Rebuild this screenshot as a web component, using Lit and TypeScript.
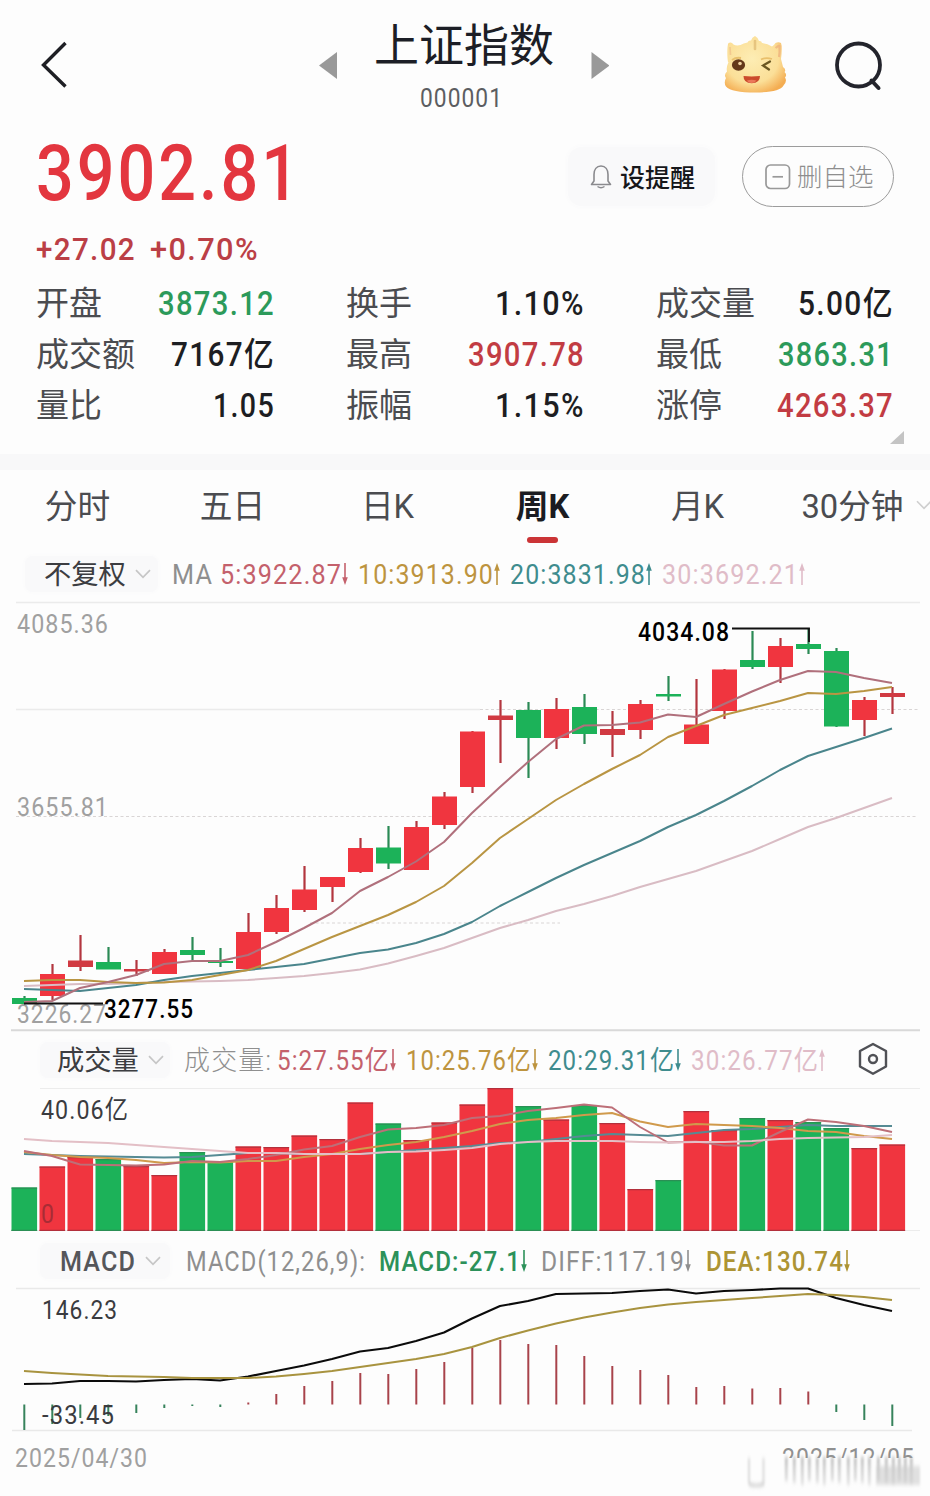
import { LitElement, html, svg, css } from "lit";
import { customElement } from "lit/decorators.js";

const STEP = 28;
const X0 = 24;
const RED = "#f0353f";
const GREEN = "#1cb259";
const cx = (i: number) => X0 + i * STEP;

// [colour, body top, body bottom, wick top, wick bottom]
type Candle = [string, number, number, number, number];
const candles: Candle[] = [
  ["g", 998, 1004, 996, 1004], ["r", 974, 996, 964, 1000], ["r", 960.5, 967, 935, 971],
  ["g", 962, 969.5, 947, 969], ["r", 969, 971.5, 960, 976], ["r", 952, 974, 949, 974],
  ["g", 950, 955, 937, 960], ["g", 961, 963, 948, 967], ["r", 932, 969, 913, 969],
  ["r", 908, 932, 895, 934], ["r", 889.5, 910, 866, 912], ["r", 877, 887, 877, 902],
  ["r", 848, 872, 838, 873], ["g", 847.5, 863.5, 826, 869], ["r", 827, 870, 821, 870],
  ["r", 796.5, 825, 792, 829], ["r", 731.5, 787, 731, 793], ["r", 715.5, 720, 700, 763],
  ["g", 710, 738, 702, 778], ["r", 709, 738, 698, 749], ["g", 707, 734, 694, 744],
  ["r", 729, 735, 711, 757], ["r", 704, 730, 700, 739], ["g", 694, 696.5, 676, 701],
  ["r", 724.5, 744, 679, 744], ["r", 669.5, 711, 669, 719], ["g", 660, 667, 631, 669],
  ["r", 646, 667, 638, 683], ["g", 644, 649, 628, 654], ["g", 651, 726.5, 648, 727],
  ["r", 700, 720, 697, 736], ["r", 693, 697, 687, 714],
];
const ma5 = [1002, 1001, 988, 982, 975, 964, 961, 961, 955, 942, 928, 913, 891, 877, 861.5, 842, 813, 787, 762, 739, 725.5, 725, 722.5, 714.5, 717, 704, 691.5, 680, 671, 672, 678, 683];
const ma10 = [981, 980, 980, 982, 983, 982.5, 980, 975, 970, 961, 949, 937, 926, 915, 902, 886, 863, 838, 819, 800, 784, 769, 755, 737, 726, 715, 708, 701, 693, 694, 691, 687];
const ma20 = [989, 990, 991, 988, 985, 980, 976, 973, 970, 967, 964, 958.5, 953, 949.5, 943, 934, 922, 906, 892, 878, 865, 853, 841, 827, 815, 801, 786, 770, 756, 747, 738, 728.5];
const ma30 = [986, 985, 984, 984, 983, 982, 981.5, 981, 980, 978, 976, 973, 969.5, 963.5, 956, 948, 938, 928, 920, 911, 904, 896, 887, 879, 871, 861, 851, 839, 827, 818, 808, 798];

const volTop = [1187.5, 1166.5, 1157, 1159, 1166, 1175, 1152, 1161, 1146.5, 1147, 1135.5, 1139, 1102.5, 1123.5, 1140, 1122.5, 1104.5, 1088, 1106, 1119.5, 1105, 1123, 1189, 1180, 1111, 1130, 1118, 1120, 1122, 1128, 1148, 1144.5];
const volColor = "grrgrrggrrrrrgrrrrgrgrrgrrgrggrr";
const v5 = [1151, 1156, 1164.5, 1165, 1165.5, 1164.5, 1161, 1162, 1159, 1155, 1149.5, 1146, 1137, 1129.5, 1128, 1125, 1118, 1116, 1111, 1108, 1104.5, 1107.5, 1127, 1142.5, 1141.5, 1145.5, 1145.5, 1132, 1119.5, 1122, 1126, 1132];
const v10 = [1152, 1155, 1157, 1158, 1160, 1163, 1162, 1162.5, 1161, 1161, 1157, 1154, 1149, 1145, 1142, 1137, 1131, 1124, 1120, 1118, 1115, 1113, 1121.5, 1127, 1124, 1125, 1126, 1128, 1131, 1132, 1136, 1139];
const v20 = [1154, 1155, 1156, 1156.5, 1157, 1157.5, 1157, 1155, 1153, 1153, 1154, 1154, 1154, 1152, 1150, 1148, 1146, 1143, 1142, 1139, 1136, 1134, 1135, 1136, 1133, 1130, 1129, 1127, 1125, 1126, 1126, 1126];
const v30 = [1139, 1141, 1142, 1143, 1145, 1147, 1149, 1151, 1153, 1153, 1154, 1154, 1154, 1152, 1151.5, 1150, 1148, 1144, 1142, 1141, 1141, 1141, 1142, 1142.5, 1142, 1142, 1141, 1139, 1138, 1137.5, 1137, 1135];

const hist = [1430, 1424, 1418, 1416, 1413, 1408, 1406, 1407, 1402.5, 1394, 1386, 1381, 1373, 1374, 1369, 1362, 1348, 1340, 1344, 1345, 1356, 1366, 1370, 1375, 1387, 1386, 1388.5, 1388, 1391.5, 1412, 1420, 1426];
const diff = [1384, 1383.5, 1381, 1381, 1381.5, 1380, 1379, 1380.5, 1376.5, 1371, 1365.5, 1359, 1351.5, 1348, 1341, 1332.5, 1318.5, 1306, 1301, 1294, 1293.5, 1293, 1291, 1289.5, 1293.5, 1291, 1290, 1288.5, 1288.5, 1298, 1305, 1311];
const dea = [1371, 1373, 1374.5, 1376, 1376.5, 1377, 1378, 1378, 1378, 1376.5, 1374, 1371, 1367, 1363, 1359, 1354, 1347, 1338, 1330.5, 1323.5, 1317.5, 1312.5, 1308, 1304.5, 1302, 1300, 1298, 1296, 1294, 1295, 1297, 1300];

const line = (ys: number[], color: string, w = 2) => svg`
  <polyline fill="none" stroke=${color} stroke-width=${w} stroke-linejoin="round"
    points=${ys.map((y, i) => `${cx(i)},${y}`).join(" ")}></polyline>`;

const label = (t: string, x: number, base: number, w: number, size: number, color: string, weight = 400) => svg`
  <text class="fig" x=${x} y=${base} textLength=${w} lengthAdjust="spacingAndGlyphs"
    font-size=${size} font-weight=${weight} fill=${color}>${t}</text>`;

const fig = (t: string, w: number, size: number, color: string, weight = 400) => html`
  <svg class="figure" width=${w} height=${size} viewBox="0 0 ${w} ${size}">
    ${label(t, 0, size * 0.86, w, size, color, weight)}
  </svg>`;

const arrow = (dir: "up" | "down", color: string, h = 20) => html`
  <svg class="arrow" width="6" height=${h} viewBox="0 0 6 20" preserveAspectRatio="none">
    <g transform=${dir === "up" ? "" : "rotate(180 3 10)"}>
      <path d="M3 3V20" stroke=${color} stroke-width="1.6"></path>
      <path d="M3 0 5.8 7H.2z" fill=${color}></path>
    </g>
  </svg>`;

const chevron = html`
  <svg class="chev" width="16" height="10" viewBox="0 0 16 10">
    <path d="M1 1.2 8 8.4 15 1.2" fill="none" stroke="#c6c6c6" stroke-width="1.7"></path>
  </svg>`;

type Stat = [string, string, number, string];
const INK = "#1d1e22";
const UP = "#c23c43";
const DOWN = "#2c9a5a";
const stats: Stat[] = [
  ["开盘", "3873.12", 117, DOWN], ["换手", "1.10%", 90, INK], ["成交量", "5.00亿", 96, INK],
  ["成交额", "7167亿", 104, INK], ["最高", "3907.78", 117, UP], ["最低", "3863.31", 116, DOWN],
  ["量比", "1.05", 62, INK], ["振幅", "1.15%", 90, INK], ["涨停", "4263.37", 117, UP],
];
const tabs = ["分时", "五日", "日K", "周K", "月K", "30分钟"];

@customElement("app-root")
export class AppRoot extends LitElement {
  static styles = css`
    :host {
      display: block;
      width: 930px;
      height: 1496px;
      overflow: hidden;
      background: #fdfdfd;
      color: #4b4c50;
      font-family: Roboto, "Noto Sans CJK SC", sans-serif;
      line-height: 1;
    }
    svg { display: block; flex: none; }
    .figure, .panel { overflow: visible; }
    .fig {
      font-family: Roboto, "Noto Sans CJK SC", sans-serif;
      letter-spacing: 0.045em;
      white-space: pre;
    }
    .header { display: flex; height: 130px; }
    .back { margin: 41px 0 0 41px; }
    .prev { margin: 52px 0 0 250px; }
    .title { width: 254px; display: flex; flex-direction: column; align-items: center; padding-top: 24px; }
    .name { font-size: 45px; line-height: 46px; font-weight: 400; color: #1c1e26; margin-bottom: 15px; white-space: nowrap; }
    .code { margin-right: 5px; }
    .next { margin-top: 52px; }
    .mascot { margin: 36px 0 0 114px; }
    .search { margin: 40px 0 0 47px; }
    .quote { display: flex; height: 102px; padding-left: 36px; }
    .price { width: 532px; padding-top: 4px; }
    .remind {
      width: 147px; height: 59px; margin-top: 17px; border-radius: 14px;
      background: #f9f9fa; display: flex; align-items: center; padding-left: 22px;
      box-sizing: border-box; box-shadow: 0 0 6px #f9f9fa;
      font-size: 25px; font-weight: 500; color: #16171b; gap: 8px;
    }
    .remove {
      width: 152px; height: 61px; margin: 16px 0 0 27px; border: 1.5px solid #9c9c9c;
      border-radius: 31px; box-sizing: border-box; display: flex; align-items: center;
      padding-left: 22px; gap: 6px; font-size: 25.5px; font-weight: 300; color: #8e8e8e;
    }
    .caption { padding-top: 3px; white-space: nowrap; }
    .change { display: flex; gap: 14px; height: 46px; padding-left: 36px; }
    .stats {
      display: grid; grid-template-columns: 239px 239px 238px; column-gap: 71px;
      grid-auto-rows: 51.2px; padding-left: 36px; height: 154px;
    }
    .stat { display: flex; justify-content: space-between; align-items: center; font-size: 33px; font-weight: 400; }
    .corner { margin: -1px 0 0 890px; }
    .band { height: 16px; margin-top: 10px; background: #f8f8f9; }
    .tabs { display: grid; grid-template-columns: repeat(6, 155px); height: 83px; position: relative; }
    .tab { display: flex; flex-direction: column; align-items: center; padding-top: 20px; font-size: 32.7px; line-height: 34px; white-space: nowrap; }
    .active { color: #1b1c22; font-weight: 700; }
    .underline { width: 31px; height: 5.5px; border-radius: 3px; background: #cb3436; margin-top: 13px; }
    .more { position: absolute; left: 916px; top: 30px; }
    .row { display: flex; align-items: center; height: 40px; }
    .ma { margin-top: 1px; padding-left: 25px; }
    .vol { margin: 8px 0 4px; padding-left: 40px; }
    .macd { margin: 6px 0 4px; padding-left: 40px; }
    .pill {
      height: 36px; display: flex; align-items: center; gap: 9px; background: #f9f9fa;
      border-radius: 8px; box-sizing: border-box; font-size: 27.3px; color: #3c3d41;
      box-shadow: 0 0 5px #f9f9fa; white-space: nowrap;
    }
    .ma .pill { width: 133px; padding-left: 19px; }
    .vol .pill { width: 130px; padding-left: 17px; }
    .macd .pill { width: 130px; padding-left: 20px; }
    .lead { margin-left: 14px; }
    .macd .lead { margin-left: 16px; }
    .item { display: flex; align-items: center; }
    .legend { display: flex; align-items: center; }
    .gear { margin: -2px 0 0 33px; }
    .dates { display: flex; justify-content: space-between; padding: 12px 14px 0 15px; }
  `;

  private header() {
    return html`
      <header class="header">
        <svg class="back" width="28" height="48" viewBox="0 0 28 48">
          <path d="M24.5 2 2.5 24 24.5 45.5" fill="none" stroke="#1e1f24" stroke-width="3.4"></path>
        </svg>
        <svg class="prev" width="18" height="27" viewBox="0 0 18 27"><path d="M0 13.5 18 0V27z" fill="#999"></path></svg>
        <div class="title">
          <div class="name">上证指数</div>
          <div class="code">${fig("000001", 83, 25, "#5c5d61")}</div>
        </div>
        <svg class="next" width="18" height="27" viewBox="0 0 18 27"><path d="M18.5 13.5 0.5 0V27z" fill="#999"></path></svg>
        ${this.mascot()}
        <svg class="search" width="50" height="54" viewBox="0 0 50 54">
          <circle cx="24.5" cy="25" r="21.500" fill="none" stroke="#23242c" stroke-width="3.800"></circle>
          <path d="M37.500 40.500 44.500 48" stroke="#23242c" stroke-width="4" stroke-linecap="round"></path>
        </svg>
      </header>`;
  }

  private mascot() {
    return html`
      <svg class="mascot" width="64" height="60" viewBox="0 0 64 60">
        <defs>
          <radialGradient id="face" cx="44%" cy="40%" r="66%">
            <stop offset="0" stop-color="#fdedb4"></stop>
            <stop offset=".66" stop-color="#fbdf98"></stop>
            <stop offset="1" stop-color="#f4ad52"></stop>
          </radialGradient>
        </defs>
        <path d="M5 26C4 20 4 10 5.500 7q3-1.500 5 1.500 3 1.500 7 .5 3-2 7-2.500 1-2.500 3.500-2 1-3.500 4-4.500 3 1.500 4 5 2.500-.5 3 2 6 .5 10 3.500 2-1.500 3.500-3.500 3-1.500 5.500 0 1.500 4 0 16 1 4 2 8 3.500 2.500 1.500 5 3 2.500 .5 5.500 2.500 4-1.500 8-4 7-28 7-24 0-29.500-6-2.500-4 0-8.500-2.500-3 1-6.500-1-4 1.500-9.500z" fill="url(#face)"></path>
        <path d="M52.500 12q3-2.500 4-2 .5 6-.5 11" fill="none" stroke="#eeb07c" stroke-width="2.200" opacity=".75"></path>
        <path d="M7 11l.5 8" fill="none" stroke="#f0bf8a" stroke-width="1.600" opacity=".7"></path>
        <path d="M32 5v8" stroke="#dcb56c" stroke-width="2.600" stroke-linecap="round" opacity=".65"></path>
        <path d="M9 24q4-3 9-2M38 23.500q5-2.500 11-.5" fill="none" stroke="#e9c06c" stroke-width="1.800"></path>
        <ellipse cx="15.500" cy="29" rx="6.600" ry="5.800" fill="#64381a"></ellipse>
        <circle cx="17" cy="27.500" r="1.800" fill="#f0d2a2"></circle>
        <path d="M47 25.500 40 29.500 46 33.500" fill="none" stroke="#6a5722" stroke-width="2.200" stroke-linecap="round"></path>
        <path d="M20.500 40q8 .8 16.500 0 0 7.200-8.300 7.200T20.500 40z" fill="#cb4a2c"></path>
        <path d="M24 44.500q4.500-1.600 9.500 0-1.500 2.500-5 2.500t-4.500-2.500z" fill="#ea785a"></path>
      </svg>`;
  }

  private quote() {
    return html`
      <section class="quote">
        <div class="price">${fig("3902.81", 266, 77, "#e3363f", 500)}</div>
        <div class="remind">
          <svg width="22" height="26" viewBox="0 0 22 26">
            <path d="M1.500 20.500H20.500L18 17V10.500C18 5.500 15.500 2 11 2S4 5.500 4 10.500V17z" fill="none" stroke="#8a8a8e" stroke-width="1.600" stroke-linejoin="round"></path>
            <path d="M7.500 22.500q3.500 2.500 7 0" fill="none" stroke="#8a8a8e" stroke-width="1.500"></path>
          </svg>
          <span class="caption">设提醒</span>
        </div>
        <div class="remove">
          <svg width="26" height="26" viewBox="0 0 26 26">
            <rect x="1" y="1" width="23.500" height="23.500" rx="4.500" fill="none" stroke="#999" stroke-width="1.700"></rect>
            <path d="M7.500 12.800H18" stroke="#999" stroke-width="1.700"></path>
          </svg>
          <span class="caption">删自选</span>
        </div>
      </section>
      <div class="change">${fig("+27.02", 100, 32, "#bb3f46", 500)}${fig("+0.70%", 109, 32, "#bb3f46", 500)}</div>
      <section class="stats">
        ${stats.map(([k, v, w, c]) => html`<div class="stat"><span>${k}</span>${fig(v, w, 33, c, 500)}</div>`)}
      </section>
      <svg class="corner" width="14" height="13" viewBox="0 0 14 13"><path d="M14 0V13H0z" fill="#c4c4c4"></path></svg>
      <div class="band"></div>`;
  }

  private tabBar() {
    return html`
      <nav class="tabs">
        ${tabs.map((t) => html`
          <div class="tab ${t === "周K" ? "active" : ""}">
            <span>${t}</span>
            ${t === "周K" ? html`<div class="underline"></div>` : ""}
          </div>`)}
        <svg class="more" width="16" height="10" viewBox="0 0 16 10">
          <path d="M1 1.200 8 8.400 15 1.200" fill="none" stroke="#cfcfcf" stroke-width="1.600"></path>
        </svg>
      </nav>`;
  }

  private item(t: string, w: number, color: string, dir: "up" | "down" | "", size = 27, weight = 400) {
    return html`<span class="item">${fig(t, w, size, color, weight)}${dir ? arrow(dir, color, 22) : ""}</span>`;
  }

  private priceChart() {
    return html`
      <svg class="panel" width="930" height="438" viewBox="0 594 930 438">
        <path d="M16 602.500H920M16 709.500H480" stroke="#ebebeb" stroke-width="1.500"></path>
        <path d="M480 709.500H918M16 816.500H918M310 923H560" stroke="#d9d5d5" stroke-width="1" stroke-dasharray="3 2.500"></path>
        <path d="M11 1030.300H920" stroke="#d9d9d9" stroke-width="2"></path>
        ${label("4085.36", 17, 633, 92, 26, "#a0a0a0")}
        ${label("3655.81", 17, 816, 92, 26, "#a0a0a0")}
        ${label("3226.27", 17, 1023, 90, 26, "#a0a0a0")}
        ${candles.map(([c, t, b, wt, wb], i) => svg`
          <path d="M${cx(i) + 0.5} ${wt}V${wb}" stroke=${c === "r" ? "#b3363f" : "#2b8a55"} stroke-width="2.2"></path>
          <rect x=${cx(i) - 12} y=${t} width="25" height=${b - t} fill=${c === "r" ? (b - t < 8 ? "#d13a42" : RED) : GREEN}></rect>`)}
        ${line(ma30, "#d9bcc4")}
        ${line(ma20, "#4a858c")}
        ${line(ma10, "#b99543")}
        ${line(ma5, "#b0707c")}
        <path d="M24 1003.500H103M732 628.500H809V642" fill="none" stroke="#111" stroke-width="1.800"></path>
        ${label("4034.08", 638, 641, 92, 26, "#000", 500)}
        ${label("3277.55", 104, 1018, 90, 26, "#000", 500)}
      </svg>`;
  }

  private volumeChart() {
    return html`
      <svg class="panel" width="930" height="151" viewBox="0 1084 930 151">
        <path d="M40 1088.500H920M11 1230.500H920" stroke="#ececec" stroke-width="1.200"></path>
        ${volTop.map((t, i) => svg`
          <rect x=${cx(i) - 12.5} y=${t} width="25.600" height=${1231 - t} fill=${volColor[i] === "r" ? RED : GREEN}></rect>
          <path d="M${cx(i) - 12.5} ${t + 0.6}h25.600M${cx(i) - 12.5} 1230.300h25.600" stroke=${volColor[i] === "r" ? "#b3303c" : "#2b8f55"} stroke-width="1.300"></path>`)}
        ${label("40.06亿", 41, 1119, 88, 26, "#3a3b3f")}
        ${label("0", 41, 1223, 14, 26, "#a82c35")}
        ${line(v20, "#568b94")}
        ${line(v10, "#d09a4c")}
        ${line(v5, "#bd6f78")}
        ${line(v30, "#e3bfc6")}
      </svg>`;
  }

  private macdChart() {
    return html`
      <svg class="panel" width="930" height="148" viewBox="0 1285 930 148">
        <path d="M16 1288.500H920M12 1430.500H912" stroke="#e9e9e9" stroke-width="1.300"></path>
        ${label("146.23", 42, 1319, 76, 26, "#3a3b3f")}
        ${hist.map((y, i) => svg`<path d="M${cx(i) + 0.3} 1404.500V${y}" stroke=${y > 1404.5 ? "#37835c" : "#a8434b"} stroke-width="2"></path>`)}
        ${label("-33.45", 42, 1424, 73, 26, "#3a3b3f")}
        ${line(diff, "#0b0b0b", 2.1)}
        ${line(dea, "#a8933f", 2)}
      </svg>`;
  }

  private dates() {
    const strokes = [785, 793, 801, 808, 816, 823, 831, 838, 847, 854, 861, 868, 877, 885, 892, 898, 904, 910];
    return html`
      <footer class="dates">
        ${fig("2025/04/30", 133, 26, "#a0a0a0")}
        <svg class="panel" width="172" height="44" viewBox="744 1445 172 44">
          <defs>
            <filter id="soft" x="-20%" y="-20%" width="140%" height="140%"><feGaussianBlur stdDeviation="1.1 2"></feGaussianBlur></filter>
            <linearGradient id="fade" x1="0" y1="1454" x2="0" y2="1488" gradientUnits="userSpaceOnUse">
              <stop offset="0" stop-color="#9a9a9a" stop-opacity=".75"></stop>
              <stop offset="1" stop-color="#c8c8c8" stop-opacity=".45"></stop>
            </linearGradient>
          </defs>
          ${label("2025/12/05", 782, 1467, 133, 26, "#909090")}
          <rect x="780" y="1458" width="140" height="14" fill="#fdfdfd"></rect>
          <g filter="url(#soft)" fill="url(#fade)">
            ${strokes.map((x, i) => svg`<rect x=${x} y="1457" width="2.6" height=${24 + (i % 3) * 2}></rect>`)}
            <rect x="876" y="1466" width="44" height="19" fill="#c8c8c8" opacity=".55"></rect>
            <path d="M749 1458V1484M763.500 1458V1484" stroke="#dadada" stroke-width="2"></path>
            <path d="M749 1484q7 3 15 0" fill="none" stroke="#b8b8b8" stroke-width="2.200"></path>
          </g>
        </svg>
      </footer>`;
  }

  render() {
    return html`
      ${this.header()} ${this.quote()} ${this.tabBar()}
      <div class="row ma">
        <div class="pill"><span class="caption">不复权</span> ${chevron}</div>
        <div class="legend lead">
          ${fig("MA", 41, 27, "#8f8f8f")}<svg width="7" height="1"></svg>
          ${this.item("5:3922.87", 122, "#c4616c", "down")}<svg width="10" height="1"></svg>
          ${this.item("10:3913.90", 136, "#bd943f", "up")}<svg width="10" height="1"></svg>
          ${this.item("20:3831.98", 136, "#3f8c8e", "up")}<svg width="10" height="1"></svg>
          ${this.item("30:3692.21", 137, "#e0bcc8", "up")}
        </div>
      </div>
      ${this.priceChart()}
      <div class="row vol">
        <div class="pill"><span class="caption">成交量</span> ${chevron}</div>
        <div class="legend lead">
          ${this.item("成交量:", 88, "#8f8f8f", "", 27, 300)}<svg width="5" height="1"></svg>
          ${this.item("5:27.55亿", 113, "#c4616c", "down")}<svg width="10" height="1"></svg>
          ${this.item("10:25.76亿", 126, "#bd943f", "down")}<svg width="10" height="1"></svg>
          ${this.item("20:29.31亿", 127, "#3f8c8e", "down")}<svg width="10" height="1"></svg>
          ${this.item("30:26.77亿", 128, "#e0bcc8", "up")}
        </div>
        <svg class="gear" width="30" height="34" viewBox="0 0 30 34">
          <path d="M15 2 28 9V24.500L15 31.800 2 24.500V9z" fill="none" stroke="#505156" stroke-width="2.400" stroke-linejoin="round"></path>
          <circle cx="15" cy="17" r="4" fill="none" stroke="#505156" stroke-width="2.400"></circle>
        </svg>
      </div>
      ${this.volumeChart()}
      <div class="row macd">
        <div class="pill">${fig("MACD", 76, 28, "#55565a", 500)}${chevron}</div>
        <div class="legend lead">
          ${this.item("MACD(12,26,9):", 180, "#8f8f8f", "")}<svg width="13" height="1"></svg>
          ${this.item("MACD:-27.1", 142, "#2c915a", "down", 27, 500)}<svg width="14" height="1"></svg>
          ${this.item("DIFF:117.19", 144, "#8f8f8f", "down")}<svg width="15" height="1"></svg>
          ${this.item("DEA:130.74", 138, "#ad9434", "down", 27, 500)}
        </div>
      </div>
      ${this.macdChart()} ${this.dates()}
    `;
  }
}
